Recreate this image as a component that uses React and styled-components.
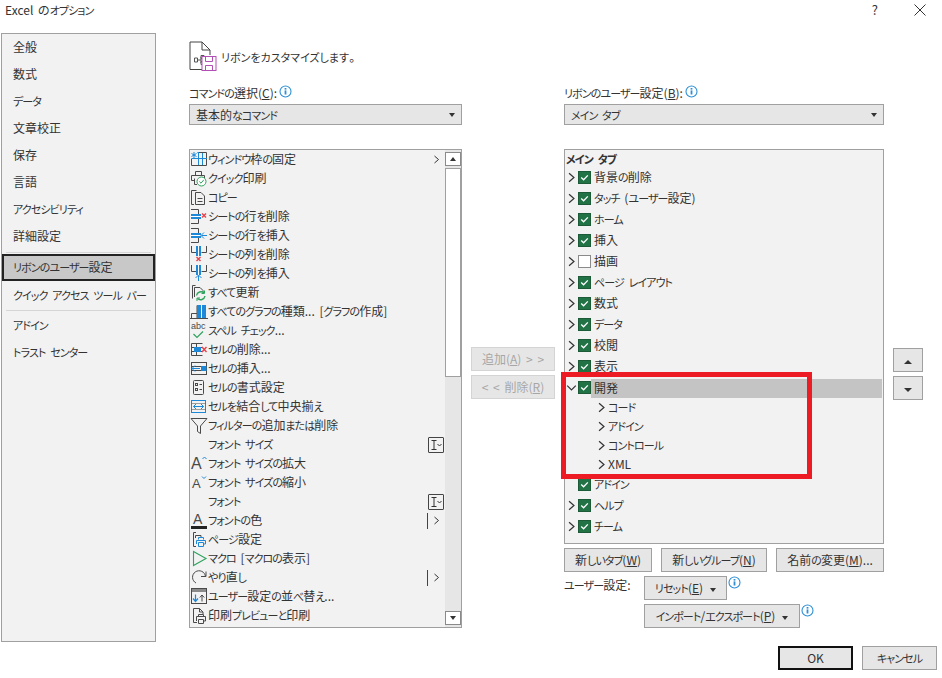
import React from "react";
import styled, { createGlobalStyle } from "styled-components";

const DARK = "#4a4a4a";
const BLUE = "#1e88d8";
const RED = "#e8404a";
const GREEN = "#2ea35c";

const sideGroups = [
  ["全般", "数式", "データ", "文章校正", "保存", "言語", "アクセシビリティ", "詳細設定"],
  ["リボンのユーザー設定", "クイック アクセス ツール バー"],
  ["アドイン", "トラスト センター"],
];

const commands = [
  { icon: "freeze", label: "ウィンドウ枠の固定", end: "chevron" },
  { icon: "print", label: "クイック印刷" },
  { icon: "copy", label: "コピー" },
  { icon: "delRow", label: "シートの行を削除" },
  { icon: "insRow", label: "シートの行を挿入" },
  { icon: "delCol", label: "シートの列を削除" },
  { icon: "insCol", label: "シートの列を挿入" },
  { icon: "refresh", label: "すべて更新" },
  { icon: "chart", label: "すべてのグラフの種類... [グラフの作成]" },
  { icon: "spell", label: "スペル チェック..." },
  { icon: "delCell", label: "セルの削除..." },
  { icon: "insCell", label: "セルの挿入..." },
  { icon: "format", label: "セルの書式設定" },
  { icon: "merge", label: "セルを結合して中央揃え" },
  { icon: "filter", label: "フィルターの追加または削除" },
  { icon: "none", label: "フォント サイズ", end: "combo" },
  { icon: "grow", label: "フォント サイズの拡大" },
  { icon: "shrink", label: "フォント サイズの縮小" },
  { icon: "none", label: "フォント", end: "combo" },
  { icon: "fontColor", label: "フォントの色", end: "split" },
  { icon: "pageSetup", label: "ページ設定" },
  { icon: "macro", label: "マクロ [マクロの表示]" },
  { icon: "redo", label: "やり直し", end: "split" },
  { icon: "sort", label: "ユーザー設定の並べ替え..." },
  { icon: "preview", label: "印刷プレビューと印刷" },
  { icon: "copy", label: "" },
];

const tabsTop = [
  { label: "背景の削除" },
  { label: "タッチ (ユーザー設定)" },
  { label: "ホーム" },
  { label: "挿入" },
  { label: "描画", off: true },
  { label: "ページ レイアウト" },
  { label: "数式" },
  { label: "データ" },
  { label: "校閲" },
  { label: "表示" },
];

const groups = ["コード", "アドイン", "コントロール", "XML"];

const tabsBottom = [
  { label: "アドイン", noArrow: true },
  { label: "ヘルプ" },
  { label: "チーム" },
];

const icons = {
  none: null,
  freeze: (
    <>
      <path d="M7.5 2.5H16.5V15.5H1.5V8.5" stroke={DARK} fill="none" />
      <path d="M8.5 2V15M2 8.5H17M12.5 3V15" stroke={BLUE} fill="none" />
      <path d="M4 2V8M1.5 3.5L6.5 6.5M6.5 3.5L1.5 6.5" stroke={BLUE} fill="none" />
    </>
  ),
  print: (
    <>
      <path d="M5.5 6V2.5H11.5V6M5 11.5H1.5V6.5H14.5V9" stroke={DARK} fill="none" />
      <path d="M4.5 9.5V15.5H7" stroke={DARK} fill="none" />
      <circle cx="11.5" cy="12.5" r="4.5" stroke={GREEN} fill="#fff" />
      <path d="M9.3 12.5L11 14.2L13.8 10.8" stroke={GREEN} fill="none" />
    </>
  ),
  copy: (
    <>
      <path d="M6.5 2.5H1.5V16.5H4" stroke={DARK} fill="none" />
      <path d="M5.5 4.5H11L14.5 8V16.5H5.5Z" stroke={DARK} fill="none" />
      <path d="M7.5 10.5H12.5M7.5 13.5H12.5" stroke={DARK} fill="none" />
    </>
  ),
  delRow: (
    <>
      <path d="M1 2.5H8.5V7M8.5 12V16.5H1" stroke={DARK} fill="none" />
      <rect x="1" y="7" width="10" height="5" fill={BLUE} />
      <path d="M1 9.5H11" stroke="#fff" />
      <path d="M12 6.5L16 10.5M16 6.5L12 10.5" stroke={RED} strokeWidth="1.4" />
    </>
  ),
  insRow: (
    <>
      <path d="M1 2.5H8.5V7M8.5 12V16.5H1" stroke={DARK} fill="none" />
      <rect x="1" y="7" width="10" height="5" fill={BLUE} />
      <path d="M1 9.5H11" stroke="#fff" />
      <path d="M17 9.5H11.5M14 6.5L11 9.5L14 12.5" stroke={BLUE} fill="none" />
    </>
  ),
  delCol: (
    <>
      <path d="M1.5 1V7.5H6M11.5 7.5H16.5V1" stroke={DARK} fill="none" />
      <rect x="6" y="1" width="5" height="10" fill={BLUE} />
      <path d="M8.5 1V11" stroke="#fff" />
      <path d="M6.5 12L10.5 16M10.5 12L6.5 16" stroke={RED} strokeWidth="1.4" />
    </>
  ),
  insCol: (
    <>
      <path d="M1.5 1V7.5H6M11.5 7.5H16.5V1" stroke={DARK} fill="none" />
      <rect x="6" y="1" width="5" height="10" fill={BLUE} />
      <path d="M8.5 1V11" stroke="#fff" />
      <path d="M8.5 17V11.5M5.5 14L8.5 11L11.5 14" stroke={BLUE} fill="none" />
    </>
  ),
  refresh: (
    <>
      <path d="M5.5 2.5H2.5V15.5" stroke={DARK} fill="none" />
      <path d="M4.5 14V4.5H10L13 7.5V9" stroke={DARK} fill="none" />
      <path d="M6.5 12.5A4.5 4.5 0 0 1 14 10M15 13A4.5 4.5 0 0 1 7.5 15.5" stroke={GREEN} strokeWidth="1.4" fill="none" />
      <path d="M14.5 7.5V10.5H11.5M7 18V15H10" stroke={GREEN} fill="none" />
    </>
  ),
  chart: (
    <>
      <path d="M1.5 16.5V11.5H7M7 16.5V3.5" stroke={DARK} fill="none" />
      <rect x="7" y="3" width="9" height="14" fill={BLUE} />
      <path d="M11.5 3V17" stroke="#fff" />
      <path d="M0 16.5H18" stroke={DARK} />
    </>
  ),
  spell: (
    <>
      <IconText x="1" y="8" fontSize="9">abc</IconText>
      <path d="M3.5 13L7 16.5L13 10.5" stroke={GREEN} strokeWidth="1.2" fill="none" />
    </>
  ),
  delCell: (
    <>
      <path d="M12.5 3.5H1.5V15.5H12.5M1.5 7.5H12M1.5 11.5H12M6.5 3.5V7M6.5 12V15.5" stroke={DARK} fill="none" />
      <rect x="4" y="7" width="7" height="5" fill={BLUE} />
      <path d="M12 7L16.5 12M16.5 7L12 12" stroke={RED} strokeWidth="1.4" />
    </>
  ),
  insCell: (
    <>
      <rect x="1.5" y="3.5" width="15" height="12" stroke={DARK} fill="none" />
      <path d="M1.5 7.5H16.5M1.5 11.5H16.5" stroke={DARK} />
      <rect x="11" y="7" width="5.5" height="5" fill={BLUE} />
      <path d="M10 9.5H2M5 6.5L2 9.5L5 12.5" stroke={BLUE} fill="none" />
    </>
  ),
  format: (
    <>
      <rect x="3.5" y="2.5" width="10" height="14" rx="1" stroke={DARK} fill="none" />
      <rect x="5.5" y="5.5" width="2" height="2" stroke={DARK} fill="none" />
      <rect x="5.5" y="10.5" width="2" height="2" stroke={DARK} fill="none" />
      <path d="M9.5 6.5H12M9.5 11.5H12" stroke={DARK} />
    </>
  ),
  merge: (
    <>
      <rect x="1.5" y="3.5" width="14" height="12" stroke={BLUE} fill="none" />
      <path d="M1.5 6.5H15.5M1.5 12.5H15.5" stroke={DARK} strokeOpacity="0.5" />
      <path d="M3.5 9.5H13.5M6 7L3.5 9.5L6 12M11 7L13.5 9.5L11 12" stroke={BLUE} fill="none" />
    </>
  ),
  filter: <path d="M1 2.5H17L10.5 10V17.5L7.5 15.5V10Z" stroke={DARK} fill="none" />,
  grow: (
    <>
      <IconText x="1" y="15" fontSize="16">A</IconText>
      <path d="M12.5 5L14.5 3L16.5 5" stroke={BLUE} fill="none" />
    </>
  ),
  shrink: (
    <>
      <IconText x="2" y="15" fontSize="13">A</IconText>
      <path d="M12 3.5L14 5.5L16 3.5" stroke={BLUE} fill="none" />
    </>
  ),
  fontColor: (
    <>
      <IconText x="3" y="13" fontSize="14">A</IconText>
      <rect x="1" y="15" width="16" height="3" fill="#222" />
    </>
  ),
  pageSetup: (
    <>
      <path d="M6 2.5H3.5V16.5H6M5.5 5.5H11V7M5.5 5.5V8" stroke={DARK} fill="none" />
      <path d="M8.5 9.5V7.5H13.5V9.5M6.5 14V10.5H15.5V14H13M8.5 12.5H13.5V16.5H8.5Z" stroke={BLUE} fill="none" />
    </>
  ),
  macro: <path d="M3.5 2.5L16 9.5L3.5 16.5Z" stroke={GREEN} strokeWidth="1.1" fill="none" />,
  redo: (
    <>
      <path d="M15.5 8.5A6.5 6.5 0 1 0 6 15" stroke={DARK} fill="none" />
      <path d="M16 3.5V8.5H11" stroke={DARK} fill="none" />
    </>
  ),
  sort: (
    <>
      <rect x="1.5" y="1.5" width="15" height="15" stroke={DARK} fill="none" />
      <rect x="2" y="2" width="14" height="3" fill="#8a8a8a" />
      <path d="M5.5 7.5V14M3 11.5L5.5 14.5L8 11.5" stroke={BLUE} strokeWidth="1.2" fill="none" />
      <path d="M12 14.5V8M9.8 10.5L12 8L14.2 10.5" stroke={DARK} fill="none" />
    </>
  ),
  preview: (
    <>
      <path d="M7 16.5H3.5V2.5H9.5L13 6V8M9.5 2.5V6H13" stroke={DARK} fill="none" />
      <path d="M8.5 10.5V8.5H13.5V10.5M6.5 15V10.5H15.5V15H13.5M8.5 13.5H13.5V17.5H8.5Z" stroke={DARK} fill="none" />
    </>
  ),
};

function IconText({ children, ...rest }) {
  return (
    <text fontFamily="'Liberation Sans', sans-serif" fill={DARK} {...rest}>
      {children}
    </text>
  );
}

// the dialog's UI font has much narrower kana than its kanji, so kana runs get their own span
function Jp({ children }) {
  return (
    <>
      {children.split(/([\u3040-\u30ff]+)/).map((part, i) =>
        i % 2 ? <Kana key={i}>{part}</Kana> : part
      )}
    </>
  );
}

function Chevron({ size = 9, down, color = "#333" }) {
  return (
    <svg width={size} height={size} viewBox="0 0 9 9" fill="none" stroke={color} strokeWidth="1">
      <path d={down ? "M1 3L4.5 6.5L8 3" : "M2.5 1L6.5 4.5L2.5 8"} />
    </svg>
  );
}

function InfoIcon() {
  return (
    <InfoSvg width="13" height="13" viewBox="0 0 13 13" fill="none">
      <circle cx="6.5" cy="6.5" r="5.5" stroke="#2e8fd6" strokeWidth="1.1" />
      <rect x="5.6" y="5.4" width="1.8" height="4.1" fill="#2e8fd6" />
      <rect x="5.6" y="3" width="1.8" height="1.6" fill="#2e8fd6" />
    </InfoSvg>
  );
}

function Tick() {
  return (
    <svg width="9" height="9" viewBox="0 0 9 9" fill="none" stroke="#fff" strokeWidth="1.3">
      <path d="M1.2 4.5L3.6 6.8L7.8 2.4" />
    </svg>
  );
}

function ComboIcon() {
  return (
    <ComboBox>
      <svg width="14" height="14" viewBox="0 0 14 14" fill="none" stroke="#333">
        <path d="M2.5 2.5H7.5M2.5 11.5H7.5M5 2.5V11.5" />
        <path d="M8.5 6L10.5 8L12.5 6" />
      </svg>
    </ComboBox>
  );
}

function CommandEnd({ kind }) {
  if (kind === "combo") return <RowEnd><ComboIcon /></RowEnd>;
  if (kind === "split") return <RowEnd $split><Chevron /></RowEnd>;
  if (kind === "chevron") return <RowEnd><Chevron /></RowEnd>;
  return null;
}

function TabRow({ tab, selected, expanded }) {
  return (
    <TreeRow>
      <TreeArrow>
        {!tab.noArrow && <Chevron size={11} down={expanded} />}
      </TreeArrow>
      <Check $off={tab.off}>{!tab.off && <Tick />}</Check>
      <TreeLabel $selected={selected}><TextNudge><Jp>{tab.label}</Jp></TextNudge></TreeLabel>
    </TreeRow>
  );
}

export default function App() {
  return (
    <Page>
      <GlobalStyle />
      <TitleBar>
        <span>Excel の<Kana>オプション</Kana></span>
        <TitleActions>
          <HelpMark>?</HelpMark>
          <svg width="12" height="12" viewBox="0 0 12 12" stroke="#333" fill="none">
            <path d="M0.5 0.5L11.5 11.5M11.5 0.5L0.5 11.5" />
          </svg>
        </TitleActions>
      </TitleBar>

      <Body>
        <Sidebar>
          {sideGroups.map((group, g) => (
            <React.Fragment key={g}>
              {g > 0 && <SideDivider $first={g === 1} />}
              {group.map((item) => (
                <SideItem key={item} $active={item === "リボンのユーザー設定"} $after={item.startsWith("クイック")}>
                  <Jp>{item}</Jp>
                </SideItem>
              ))}
            </React.Fragment>
          ))}
        </Sidebar>

        <Content>
          <Heading>
            <svg width="28" height="30" viewBox="0 0 28 30" fill="none">
              <path d="M15 28.5H1V1H13L21 9V14M13 1V9H21" stroke="#444" />
              <path d="M5.5 17H8.5V21H5.5ZM8.5 19H12M12 14.5H15V17.5H12ZM12 20.5H15V23.5H12ZM12 16V22" stroke="#555" />
              <rect x="13" y="15.5" width="14" height="14" fill="#fff" stroke="#b14fb5" />
              <path d="M16.5 15.5V20.5H23.5V15.5M16.5 29.5V24.5H23.5V29.5" stroke="#b14fb5" />
            </svg>
            <HeadingText><Jp>リボンをカスタマイズします。</Jp></HeadingText>
          </Heading>

          <Columns>
            <CommandColumn>
              <FieldLabel>
                <span><Jp>コマンドの選択</Jp>(<u>C</u>):</span>
                <InfoIcon />
              </FieldLabel>
              <Select>
                <span><Jp>基本的なコマンド</Jp></span>
                <Caret />
              </Select>
              <CommandList>
                <CommandRows>
                  {commands.map((cmd, i) => (
                    <CommandRow key={i}>
                      <svg width="18" height="19" viewBox="0 0 18 19">{icons[cmd.icon]}</svg>
                      <TextNudge><Jp>{cmd.label}</Jp></TextNudge>
                      {cmd.end && <CommandEnd kind={cmd.end} />}
                    </CommandRow>
                  ))}
                </CommandRows>
                <Scrollbar>
                  <ScrollButton><Caret $up /></ScrollButton>
                  <ScrollThumb />
                  <ScrollButton><Caret /></ScrollButton>
                </Scrollbar>
              </CommandList>
            </CommandColumn>

            <MoveColumn>
              <Button $w={84} disabled>追加(<u>A</u>) &gt; &gt;</Button>
              <Button $w={84} disabled>&lt; &lt; 削除(<u>R</u>)</Button>
            </MoveColumn>

            <RibbonColumn>
              <FieldLabel>
                <span><Jp>リボンのユーザー設定</Jp>(<u>B</u>):</span>
                <InfoIcon />
              </FieldLabel>
              <Select>
                <span><Jp>メイン タブ</Jp></span>
                <Caret />
              </Select>
              <Tree>
                <TreeHead><Jp>メイン タブ</Jp></TreeHead>
                {tabsTop.map((tab) => (
                  <TabRow key={tab.label} tab={tab} />
                ))}
                <TabRow tab={{ label: "開発" }} selected expanded />
                {groups.map((name) => (
                  <GroupRow key={name}>
                    <Chevron size={11} />
                    <TextNudge><Jp>{name}</Jp></TextNudge>
                  </GroupRow>
                ))}
                {tabsBottom.map((tab) => (
                  <TabRow key={tab.label} tab={tab} />
                ))}
                <Highlight />
              </Tree>
              <TreeButtons>
                <Button $w={88}><Jp>新しいタブ</Jp>(<u>W</u>)</Button>
                <Button $w={106}><Jp>新しいグループ</Jp>(<u>N</u>)</Button>
                <Button $w={108}><Jp>名前の変更</Jp>(<u>M</u>)...</Button>
              </TreeButtons>
              <CustomRow>
                <CustomLabel><Jp>ユーザー設定:</Jp></CustomLabel>
                <CustomStack>
                  <CustomLine>
                    <Button $w={83}><Jp>リセット</Jp>(<u>E</u>)<Caret $gap /></Button>
                    <InfoIcon />
                  </CustomLine>
                  <CustomLine>
                    <Button $w={156}><Jp>インポート/エクスポート</Jp>(<u>P</u>)<Caret $gap /></Button>
                    <InfoIcon />
                  </CustomLine>
                </CustomStack>
              </CustomRow>
            </RibbonColumn>

            <OrderColumn>
              <Button $w={30}><Caret $up $big /></Button>
              <Button $w={30}><Caret $big /></Button>
            </OrderColumn>
          </Columns>
        </Content>
      </Body>

      <Footer>
        <Button $w={75} $primary>OK</Button>
        <Button $w={75}><Jp>キャンセル</Jp></Button>
      </Footer>
    </Page>
  );
}

const GlobalStyle = createGlobalStyle`
  html, body {
    margin: 0;
    padding: 0;
    background: #fff;
  }
`;

const Page = styled.div`
  width: 942px;
  height: 678px;
  overflow: hidden;
  background: #fff;
  color: #333;
  font-family: "Noto Sans CJK JP", "Noto Sans", sans-serif;
  font-size: 12px;
  line-height: 16px;
  font-feature-settings: "palt";
  word-spacing: 2px;
  box-sizing: border-box;
`;

const Kana = styled.span`
  font-size: 11px;
  letter-spacing: -0.9px;
`;

const TextNudge = styled.span`
  margin-bottom: 2px;
  white-space: nowrap;
`;

const TitleBar = styled.div`
  height: 33px;
  padding: 2px 16px 0 5px;
  box-sizing: border-box;
  display: flex;
  justify-content: space-between;
  align-items: flex-start;
`;

const TitleActions = styled.div`
  display: flex;
  align-items: center;
  gap: 36px;
  height: 16px;
`;

const HelpMark = styled.span`
  font-size: 13px;
`;

const Body = styled.div`
  display: flex;
  height: 609px;
`;

const Sidebar = styled.nav`
  width: 155px;
  margin-left: 1px;
  box-sizing: border-box;
  border: 1px solid #a0a0a0;
  background: #f2f2f2;
  display: flex;
  flex-direction: column;
`;

const SideItem = styled.div`
  height: 27px;
  flex: none;
  box-sizing: border-box;
  white-space: nowrap;
  line-height: ${(p) => (p.$active ? "21px" : "25px")};
  padding-left: ${(p) => (p.$active ? "9px" : "11px")};
  margin-top: ${(p) => (p.$after ? "1px" : "0")};
  border: ${(p) => (p.$active ? "2px solid #222" : "none")};
  background: ${(p) => (p.$active ? "#c8c8c8" : "transparent")};
`;

const SideDivider = styled.div`
  height: 1px;
  flex: none;
  margin: ${(p) => (p.$first ? "2px 4px 1px" : "1px 4px 1px")};
  background: #d5d5d5;
`;

const Content = styled.div`
  padding-left: 33px;
  display: flex;
  flex-direction: column;
`;

const Heading = styled.div`
  height: 52px;
  padding-top: 8px;
  box-sizing: border-box;
  display: flex;
  align-items: flex-start;
  gap: 4px;
`;

const HeadingText = styled.span`
  margin-top: 8px;
  ${Kana} {
    letter-spacing: 0;
  }
`;

const Columns = styled.div`
  display: flex;
  align-items: flex-start;
`;

const CommandColumn = styled.div`
  width: 273px;
  flex: none;
`;

const MoveColumn = styled.div`
  width: 102px;
  flex: none;
  padding: 262px 0 0 9px;
  box-sizing: border-box;
  display: flex;
  flex-direction: column;
  gap: 4px;
`;

const RibbonColumn = styled.div`
  width: 320px;
  flex: none;
`;

const OrderColumn = styled.div`
  padding: 263px 0 0 9px;
  display: flex;
  flex-direction: column;
  gap: 4px;
`;

const FieldLabel = styled.div`
  height: 19px;
  display: flex;
  align-items: flex-start;
  gap: 2px;
`;

const InfoSvg = styled.svg`
  flex: none;
`;

const Select = styled.div`
  height: 21px;
  box-sizing: border-box;
  border: 1px solid #a0a0a0;
  background: #e6e6e6;
  padding: 0 6px;
  display: flex;
  align-items: center;
  justify-content: space-between;
`;

const Caret = styled.i`
  display: inline-block;
  vertical-align: middle;
  width: 0;
  height: 0;
  margin-left: ${(p) => (p.$gap ? "7px" : "0")};
  border-left: ${(p) => (p.$big ? "4.5px" : "3.5px")} solid transparent;
  border-right: ${(p) => (p.$big ? "4.5px" : "3.5px")} solid transparent;
  border-top: ${(p) => (p.$up ? "none" : "4px solid #333")};
  border-bottom: ${(p) => (p.$up ? "4px solid #333" : "none")};
`;

const CommandList = styled.div`
  margin-top: 24px;
  height: 479px;
  box-sizing: border-box;
  border: 1px solid #a0a0a0;
  background: #f2f2f2;
  display: flex;
  overflow: hidden;
`;

const CommandRows = styled.div`
  width: 255px;
  flex: none;
`;

const CommandRow = styled.div`
  height: 19px;
  display: flex;
  align-items: center;
  white-space: nowrap;
  svg {
    flex: none;
  }
`;

const RowEnd = styled.div`
  margin-left: auto;
  width: 18px;
  height: 16px;
  box-sizing: border-box;
  display: flex;
  align-items: center;
  justify-content: center;
  border-left: ${(p) => (p.$split ? "1px solid #444" : "none")};
`;

const ComboBox = styled.div`
  width: 16px;
  height: 16px;
  box-sizing: border-box;
  border: 1px solid #444;
  border-radius: 1px;
  display: flex;
  align-items: center;
  justify-content: center;
`;

const Scrollbar = styled.div`
  flex: 1;
  background: #e6e6e6;
  padding: 2px 0;
  box-sizing: border-box;
  display: flex;
  flex-direction: column;
  gap: 2px;
`;

const ScrollButton = styled.div`
  height: 14px;
  flex: none;
  box-sizing: border-box;
  background: #fff;
  border: 1px solid #8a8a8a;
  display: flex;
  align-items: center;
  justify-content: center;
`;

const ScrollThumb = styled.div`
  height: 209px;
  flex: none;
  margin-bottom: auto;
  box-sizing: border-box;
  background: #fff;
  border: 1px solid #a0a0a0;
`;

const Tree = styled.div`
  position: relative;
  margin-top: 24px;
  height: 395px;
  box-sizing: border-box;
  border: 1px solid #a0a0a0;
  background: #f2f2f2;
`;

const TreeHead = styled.div`
  height: 17px;
  padding-left: 1px;
  line-height: 17px;
  font-weight: 700;
`;

const TreeRow = styled.div`
  height: 21px;
  display: flex;
  align-items: center;
`;

const TreeArrow = styled.div`
  width: 13px;
  height: 11px;
  padding-left: 1px;
  box-sizing: border-box;
  flex: none;
  display: flex;
`;

const Check = styled.div`
  width: 13px;
  height: 13px;
  flex: none;
  box-sizing: border-box;
  border: 1px solid ${(p) => (p.$off ? "#8a8a8a" : "#1c5a38")};
  background: ${(p) => (p.$off ? "#fff" : "#217346")};
  display: flex;
  align-items: center;
  justify-content: center;
`;

const TreeLabel = styled.div`
  flex: 1;
  align-self: stretch;
  margin: ${(p) => (p.$selected ? "2px 1px 0 0" : "0")};
  padding-left: 3px;
  display: flex;
  align-items: center;
  background: ${(p) => (p.$selected ? "#c4c4c4" : "transparent")};
`;

const GroupRow = styled.div`
  height: 19px;
  padding-left: 31px;
  display: flex;
  align-items: center;
  gap: 1px;
`;

const Highlight = styled.div`
  position: absolute;
  left: -4px;
  top: 222px;
  width: 251px;
  height: 107px;
  box-sizing: border-box;
  border: 5px solid #ed1c24;
  pointer-events: none;
`;

const Button = styled.button`
  width: ${(p) => p.$w}px;
  height: 24px;
  flex: none;
  padding: 0;
  box-sizing: border-box;
  font: inherit;
  font-feature-settings: inherit;
  word-spacing: inherit;
  white-space: nowrap;
  color: ${(p) => (p.disabled ? "#a6a6a6" : "#333")};
  background: #e6e6e6;
  border: ${(p) => (p.$primary ? "2px solid #111" : p.disabled ? "1px solid #d4d4d4" : "1px solid #a0a0a0")};
  display: block;
  text-align: center;
  line-height: 20px;
`;

const TreeButtons = styled.div`
  margin-top: 4px;
  display: flex;
  justify-content: space-between;
`;

const CustomRow = styled.div`
  margin-top: 4px;
  display: flex;
`;

const CustomLabel = styled.div`
  width: 80px;
  flex: none;
  padding-top: 1px;
`;

const CustomStack = styled.div`
  display: flex;
  flex-direction: column;
  gap: 4px;
`;

const CustomLine = styled.div`
  display: flex;
  align-items: flex-start;
  gap: 1px;
`;

const Footer = styled.div`
  padding: 4px 5px 0 0;
  display: flex;
  justify-content: flex-end;
  gap: 9px;
`;
